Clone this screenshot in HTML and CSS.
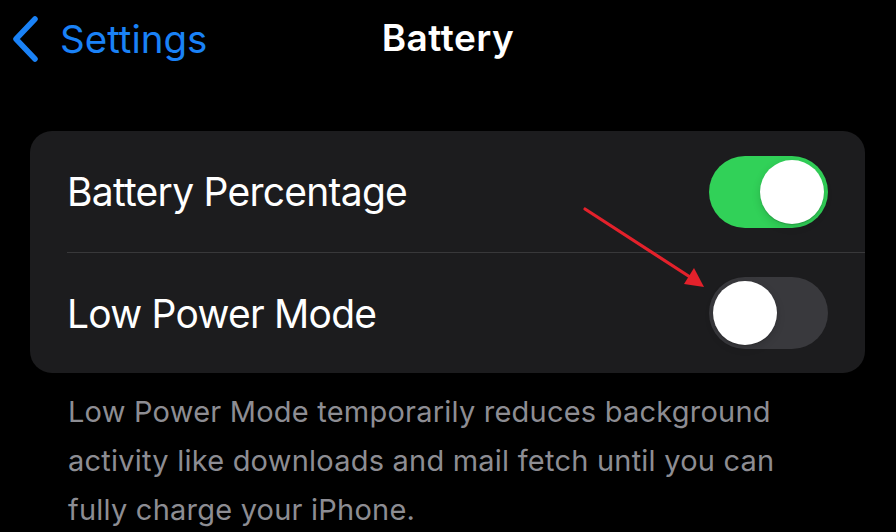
FILE: index.html
```html
<!DOCTYPE html>
<html lang="en">
<head>
<meta charset="utf-8">
<title>Battery</title>
<link rel="stylesheet" href="styles.css">
</head>
<body>
  <header class="nav">
    <a class="back" href="#">
      <svg class="chevron" width="28" height="46" viewBox="0 0 28 46" aria-hidden="true">
        <path d="M23 3 L4 23 L23 43" fill="none" stroke="#1a82f7" stroke-width="5.5" stroke-linecap="round" stroke-linejoin="round"/>
      </svg>
      <span class="back-label">Settings</span>
    </a>
    <h1 class="title">Battery</h1>
    <span class="nav-spacer"></span>
  </header>

  <main class="content">
    <section class="group">
      <div class="row">
        <span class="row-label">Battery Percentage</span>
        <span class="switch switch-on"><span class="knob"></span></span>
      </div>
      <div class="row">
        <span class="row-label">Low Power Mode</span>
        <span class="switch switch-off"><span class="knob"></span></span>
      </div>
      <svg class="pointer" width="140" height="100" viewBox="0 0 140 100" aria-hidden="true">
        <line x1="5" y1="4" x2="110" y2="72" stroke="#e3212b" stroke-width="3.2" stroke-linecap="round"/>
        <polygon points="124,82 104,79 114,63" fill="#e3212b"/>
      </svg>
    </section>
    <p class="footnote">Low Power Mode temporarily reduces background activity like downloads and mail fetch until you can fully charge your iPhone.</p>
  </main>
</body>
</html>
```

FILE: styles.css
```css
* {
  box-sizing: border-box;
}

html, body {
  margin: 0;
  padding: 0;
  background: #000;
}

body {
  width: 896px;
  height: 532px;
  overflow: hidden;
  font-family: Inter, "Noto Sans", "Liberation Sans", sans-serif;
  color: #fff;
  -webkit-font-smoothing: antialiased;
}

/* Navigation bar */
.nav {
  display: grid;
  grid-template-columns: 1fr auto 1fr;
  align-items: center;
  height: 78px;
}

.back {
  display: flex;
  align-items: center;
  gap: 20px;
  margin-left: 12px;
  color: #1a82f7;
  text-decoration: none;
}

.chevron {
  display: block;
}

.back-label {
  font-size: 38.5px;
  font-weight: 400;
  letter-spacing: 0;
  line-height: 1;
}

.title {
  margin: 0;
  font-size: 37px;
  font-weight: 600;
  letter-spacing: 0.5px;
  line-height: 1;
  padding-bottom: 4px;
}

/* Content */
.content {
  padding: 53px 31px 0 30px;
}

.group {
  position: relative;
  background: #1c1c1e;
  border-radius: 22px;
  padding-left: 37px;
}

.row {
  display: flex;
  align-items: center;
  justify-content: space-between;
  height: 121px;
  padding-right: 37px;
}

.row + .row {
  border-top: 1px solid #38383a;
}

.row-label {
  font-size: 39px;
  font-weight: 400;
  letter-spacing: -0.75px;
  line-height: 1;
}

/* Toggle switches */
.switch {
  display: flex;
  align-items: center;
  width: 119px;
  height: 72px;
  border-radius: 36px;
  padding: 4px;
}

.switch-on {
  background: #31d158;
  justify-content: flex-end;
}

.switch-off {
  background: #39393d;
  justify-content: flex-start;
}

.knob {
  width: 64px;
  height: 64px;
  border-radius: 50%;
  background: #fff;
  box-shadow: 0 3px 8px rgba(0, 0, 0, 0.15), 0 1px 1px rgba(0, 0, 0, 0.16);
}

/* Red annotation arrow over the group */
.pointer {
  position: absolute;
  left: 550px;
  top: 74px;
  overflow: visible;
}

/* Footer explanation */
.footnote {
  margin: 14px 0 0;
  padding: 0 50px 0 38px;
  color: #8d8d93;
  font-size: 29px;
  line-height: 49px;
  letter-spacing: 0.22px;
}
```
